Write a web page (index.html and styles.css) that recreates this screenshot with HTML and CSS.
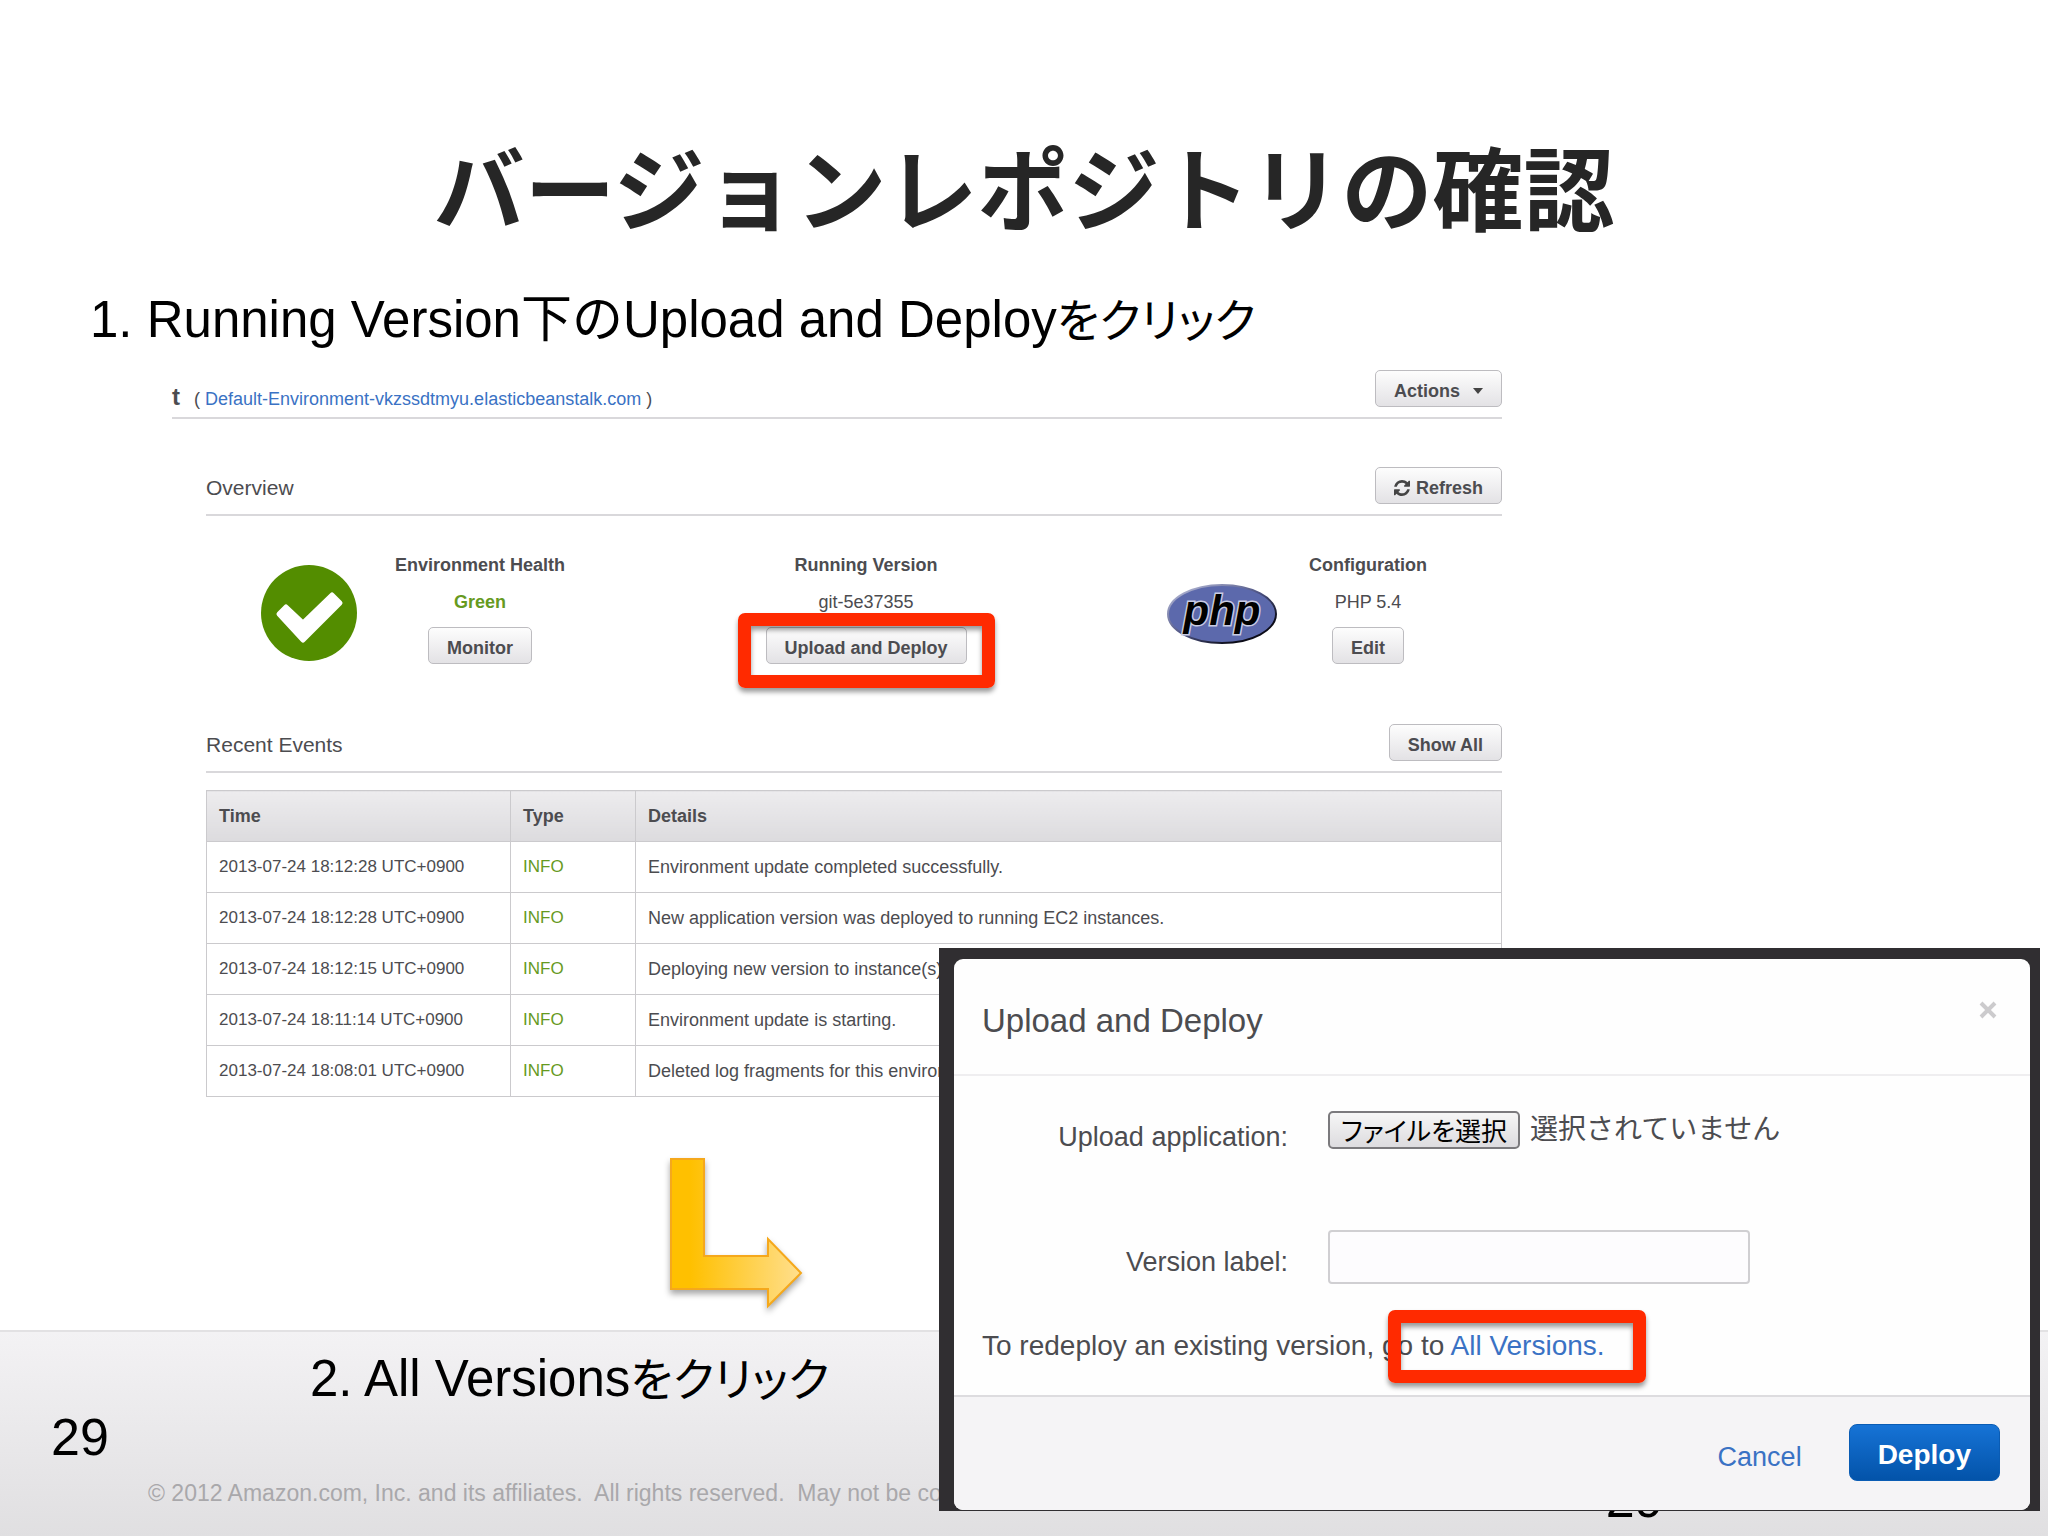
FILE: index.html
```html
<!DOCTYPE html>
<html lang="ja">
<head>
<meta charset="utf-8">
<title>バージョンレポジトリの確認</title>
<meta name="viewport" content="width=device-width, initial-scale=1">
<link rel="stylesheet" href="styles.css">
</head>
<body>
<div class="slide">
  <main class="content">
    <h1 class="slide-title">バージョンレポジトリの確認</h1>
    <h2 class="step">1. Running Version下のUpload and Deploy<span class="kana">をクリック</span></h2>

    <section class="console">
      <header class="env-bar">
        <div class="env-name"><strong class="env-title">t</strong><span>( <a href="#env">Default-Environment-vkzssdtmyu.elasticbeanstalk.com</a> )</span></div>
        <button class="btn btn-menu" type="button">Actions<svg class="caret" viewBox="0 0 10 6" aria-hidden="true"><path d="M0 0h10L5 6z"/></svg></button>
      </header>

      <div class="console-body">
        <div class="section-bar">
          <h3 class="section-title">Overview</h3>
          <button class="btn btn-icon" type="button"><svg class="refresh" viewBox="128 128 1536 1536" aria-hidden="true"><path d="M1639 1056q0 5-1 7-64 268-268 434.500t-478 166.500q-146 0-282.500-55t-243.500-157l-129 129q-19 19-45 19t-45-19-19-45v-448q0-26 19-45t45-19h448q26 0 45 19t19 45-19 45l-137 137q71 66 161 102t187 36q134 0 250-65t186-179q11-17 53-117 8-23 30-23h192q13 0 22.500 9.500t9.500 22.500zm25-800v448q0 26-19 45t-45 19h-448q-26 0-45-19t-19-45 19-45l138-138q-148-137-349-137-134 0-250 65t-186 179q-11 17-53 117-8 23-30 23h-199q-13 0-22.500-9.500t-9.500-22.500v-7q65-268 270-434.500t480-166.500q146 0 284 55.500t245 156.500l130-129q19-19 45-19t45 19 19 45z"/></svg>Refresh</button>
        </div>

        <div class="overview">
          <div class="summary summary-health">
            <svg class="summary-icon check" viewBox="0 0 96 96" aria-hidden="true"><circle cx="48" cy="48" r="48"/><path d="M18 49l7-7 17 16 29-28 8 8-37 37z"/></svg>
            <div class="summary-text">
              <h4>Environment Health</h4>
              <p class="status-green">Green</p>
              <button class="btn" type="button">Monitor</button>
            </div>
          </div>
          <div class="summary">
            <div class="summary-text">
              <h4>Running Version</h4>
              <p>git-5e37355</p>
              <span class="highlight highlight-button"><button class="btn" type="button">Upload and Deploy</button></span>
            </div>
          </div>
          <div class="summary summary-config">
            <svg class="summary-icon php" viewBox="0 0 110 62" aria-hidden="true">
              <defs>
                <linearGradient id="rim" x1="0" y1="0" x2="1" y2="1"><stop offset="0" stop-color="#c4c8e4"/><stop offset="0.5" stop-color="#4a5080"/><stop offset="0.8" stop-color="#0c0c18"/></linearGradient>
              </defs>
              <ellipse cx="55" cy="32" rx="54" ry="29" fill="#5c69ac" stroke="url(#rim)" stroke-width="2"/>
              <text x="55" y="43" text-anchor="middle">php</text>
            </svg>
            <div class="summary-text">
              <h4>Configuration</h4>
              <p>PHP 5.4</p>
              <button class="btn" type="button">Edit</button>
            </div>
          </div>
        </div>

        <div class="section-bar">
          <h3 class="section-title">Recent Events</h3>
          <button class="btn" type="button">Show All</button>
        </div>
        <table class="events">
          <colgroup><col class="col-time"><col class="col-type"><col></colgroup>
          <thead>
            <tr><th scope="col">Time</th><th scope="col">Type</th><th scope="col">Details</th></tr>
          </thead>
          <tbody>
            <tr><td>2013-07-24 18:12:28 UTC+0900</td><td class="info">INFO</td><td class="details">Environment update completed successfully.</td></tr>
            <tr><td>2013-07-24 18:12:28 UTC+0900</td><td class="info">INFO</td><td class="details">New application version was deployed to running EC2 instances.</td></tr>
            <tr><td>2013-07-24 18:12:15 UTC+0900</td><td class="info">INFO</td><td class="details">Deploying new version to instance(s).</td></tr>
            <tr><td>2013-07-24 18:11:14 UTC+0900</td><td class="info">INFO</td><td class="details">Environment update is starting.</td></tr>
            <tr><td>2013-07-24 18:08:01 UTC+0900</td><td class="info">INFO</td><td class="details">Deleted log fragments for this environment.</td></tr>
          </tbody>
        </table>
      </div>
    </section>

    <div class="next">
      <svg class="arrow" viewBox="0 0 132 148" aria-hidden="true">
        <defs>
          <linearGradient id="gold" x1="0" y1="0" x2="1" y2="0"><stop offset="0.15" stop-color="#ffc000"/><stop offset="1" stop-color="#ffdf8e"/></linearGradient>
        </defs>
        <path d="M1 1h33v97h64V81l33 34-33 33v-17H1z" fill="url(#gold)" stroke="#f5a81c" stroke-width="2"/>
      </svg>
    </div>
  </main>

  <footer class="slide-footer">
    <h2 class="step step-two">2. All Versions<span class="kana">をクリック</span></h2>
    <p class="page-number">29</p>
    <p class="copyright">© 2012 Amazon.com, Inc. and its affiliates.&nbsp; All rights reserved.&nbsp; May not be copied</p>
    <p class="page-number page-number-right">29</p>
  </footer>

  <div class="backdrop">
    <form class="modal" role="dialog" aria-labelledby="modal-title">
      <header class="modal-header">
        <h2 class="modal-title" id="modal-title">Upload and Deploy</h2>
        <button class="close" type="button" aria-label="Close"><svg viewBox="0 0 18 18" aria-hidden="true"><path d="M2 2l14 14M16 2L2 16"/></svg></button>
      </header>
      <div class="modal-body">
        <div class="field">
          <label class="field-label" for="bundle">Upload application:</label>
          <div class="file-picker">
            <input class="file-input" id="bundle" type="file">
            <label class="file-button" for="bundle">ファイルを選択</label>
            <span class="file-status">選択されていません</span>
          </div>
        </div>
        <div class="field">
          <label class="field-label" for="version">Version label:</label>
          <input class="text-input" id="version" type="text">
        </div>
        <p class="redeploy">To redeploy an existing version, go <span class="highlight highlight-link">to <a href="#versions">All Versions.</a></span></p>
      </div>
      <footer class="modal-footer">
        <a class="cancel" href="#cancel">Cancel</a>
        <button class="deploy" type="submit">Deploy</button>
      </footer>
    </form>
  </div>
</div>
</body>
</html>
```
FILE: styles.css
```css
* {
  box-sizing: border-box;
}

body,
h1,
h2,
h3,
h4,
p {
  margin: 0;
}

body {
  background: #fff;
  color: #000;
  font-family: "Liberation Sans", Arial, "Noto Sans CJK JP", sans-serif;
}

button,
input {
  font: inherit;
}

a {
  color: #3a72c4;
  text-decoration: none;
}

.slide {
  position: relative;
  display: flex;
  flex-direction: column;
  min-height: 100vh;
}

.content {
  flex: 1;
}

.slide-title {
  padding: 124px 0 6px;
  font-family: "Noto Sans CJK JP", sans-serif;
  font-size: 91px;
  font-weight: 700;
  line-height: 120px;
  text-align: center;
  color: #262626;
}

.step {
  margin: 41px 0 21px 90px;
  font-size: 51px;
  font-weight: 400;
  line-height: 58px;
}

.kana {
  font-size: 46px;
  line-height: 1;
  font-feature-settings: "palt";
}

/* Environment console */
.console {
  margin: 0 26.66% 0 8.4%;
  font-size: 18px;
  color: #4c4c50;
}

.env-bar,
.section-bar {
  display: flex;
  justify-content: space-between;
  align-items: flex-end;
  padding-bottom: 10px;
  border-bottom: 2px solid #d9d8db;
}

.env-name {
  display: flex;
  align-items: baseline;
  gap: 14px;
  line-height: 16px;
}

.env-title {
  font-size: 24px;
}

.console-body {
  padding: 48px 0 0 34px;
}

.section-title {
  font-size: 21px;
  font-weight: 400;
  line-height: 32px;
}

.btn {
  padding: 10px 18px 5px;
  border: 1px solid #bdbcc0;
  border-radius: 5px;
  background: linear-gradient(#fdfdfd, #e3e2e5);
  color: #4c4c50;
  font-size: 18px;
  font-weight: 700;
  line-height: 20px;
}

.btn-menu,
.btn-icon {
  display: flex;
  align-items: center;
  gap: 6px;
}

.btn-menu {
  gap: 13px;
}

.caret {
  width: 10px;
  height: 6px;
  fill: #444;
}

.refresh {
  width: 16px;
  height: 16px;
  fill: #444;
}

.overview {
  display: flex;
  justify-content: space-between;
  padding: 37px 75px 60px 55px;
}

.summary {
  display: flex;
  align-items: center;
}

.summary-health {
  gap: 38px;
}

.summary-config {
  gap: 32px;
}

.summary-icon {
  margin-top: 8px;
}

.check {
  width: 96px;
  height: 96px;
  fill: #538d00;
}

.check path {
  fill: #fff;
  stroke: #fff;
  stroke-width: 5;
  stroke-linejoin: round;
}

.php {
  width: 110px;
  height: 62px;
}

.php text {
  font-size: 42px;
  font-weight: 700;
  font-style: italic;
  fill: #000;
  stroke: #c9cce2;
  stroke-width: 3;
  paint-order: stroke;
}

.summary-text {
  display: flex;
  flex-direction: column;
  align-items: center;
  gap: 13px;
  line-height: 24px;
}

.summary-text h4 {
  font-size: 18px;
}

.summary-text p {
  font-size: 18px;
}

.summary-text .status-green {
  font-weight: 700;
  color: #669a1e;
}

/* Red call-out frames */
.highlight {
  position: relative;
}

.highlight::after {
  content: "";
  position: absolute;
  border: 13px solid #ff2a00;
  border-radius: 7px;
  box-shadow: 0 4px 5px rgba(0, 0, 0, 0.4), inset 0 4px 5px rgba(0, 0, 0, 0.4);
  pointer-events: none;
}

.highlight-button::after {
  inset: -14px -28px -24px;
}

.highlight-link::after {
  inset: -20px -41px -22px -33px;
}

.events {
  width: 100%;
  margin-top: 17px;
  border-collapse: collapse;
  table-layout: fixed;
  font-size: 17px;
  line-height: 20px;
}

.col-time {
  width: 304px;
}

.col-type {
  width: 125px;
}

.events th,
.events td {
  height: 51px;
  padding: 0 12px;
  border: 1px solid #cbcacd;
  text-align: left;
}

.events th {
  background: linear-gradient(#edecee, #dcdbde);
  font-size: 18px;
}

.events .info {
  color: #669a1e;
}

.events .details {
  font-size: 18px;
}

.next {
  padding: 61px 0 22px 670px;
}

.arrow {
  display: block;
  width: 132px;
  height: 148px;
  overflow: visible;
  filter: drop-shadow(0 4px 3px rgba(0, 0, 0, 0.35));
}

/* Footer band */
.slide-footer {
  position: relative;
  padding: 18px 0 29px;
  border-top: 2px solid #e2e1e3;
  background: linear-gradient(#f3f2f4, #e0dfe1);
}

.step-two {
  margin: 0 0 0 310px;
}

.page-number {
  padding-left: 51px;
  font-size: 52px;
  line-height: 58px;
}

.copyright {
  margin: 13px 0 0 148px;
  font-size: 23px;
  line-height: 28px;
  color: #a9a8ab;
}

.page-number-right {
  position: absolute;
  left: 78.4%;
  bottom: 8px;
  padding: 0;
}

/* Upload dialog */
.backdrop {
  position: absolute;
  right: 8px;
  bottom: 25px;
  width: 53.76%;
  padding: 11px 10px 1px 15px;
  background: #302e31;
}

.modal {
  overflow: hidden;
  border-radius: 9px;
  background: #fefefe;
  color: #4c4c50;
  font-size: 27px;
  line-height: 32px;
}

.modal-header {
  display: flex;
  justify-content: space-between;
  align-items: flex-start;
  padding: 42px 33px 33px 28px;
  border-bottom: 2px solid #efeef0;
}

.modal-title {
  font-size: 33px;
  font-weight: 400;
  line-height: 40px;
}

.close {
  padding: 0;
  border: 0;
  background: none;
}

.close svg {
  display: block;
  width: 18px;
  height: 18px;
  stroke: #cccbcd;
  stroke-width: 4;
}

.modal-body {
  padding: 35px 28px 31px;
}

.field {
  display: grid;
  grid-template-columns: 306px 1fr;
  gap: 40px;
  align-items: center;
}

.field + .field {
  margin-top: 77px;
}

.field-label {
  padding-top: 10px;
  text-align: right;
}

.file-picker {
  position: relative;
  display: flex;
  align-items: flex-start;
  align-self: start;
  gap: 10px;
  font-family: "Noto Sans CJK JP", sans-serif;
}

.file-input {
  position: absolute;
  width: 1px;
  height: 1px;
  opacity: 0;
}

.file-button {
  padding: 1px 11px;
  border: 2px solid #7b7a7d;
  border-radius: 5px;
  background: linear-gradient(#f6f6f6, #dddcdf);
  color: #000;
  font-size: 26px;
  font-feature-settings: "palt";
}

.file-status {
  font-size: 28px;
}

.text-input {
  width: 422px;
  height: 54px;
  padding: 0 12px;
  border: 2px solid #d0cfd2;
  border-radius: 4px;
  background: #fdfcfe;
}

.redeploy {
  margin-top: 44px;
  font-size: 28px;
  line-height: 36px;
}

.modal-footer {
  display: flex;
  justify-content: flex-end;
  align-items: center;
  gap: 47px;
  padding: 27px 30px 29px;
  border-top: 2px solid #dddcdf;
  background: #f5f4f6;
}

.cancel {
  padding-top: 8px;
}

.deploy {
  padding: 14px 28px 9px;
  border: 1px solid #0a5cb4;
  border-radius: 8px;
  background: linear-gradient(#1673d6, #0353a9);
  color: #fff;
  font-size: 28px;
  font-weight: 700;
  line-height: 32px;
}
```
